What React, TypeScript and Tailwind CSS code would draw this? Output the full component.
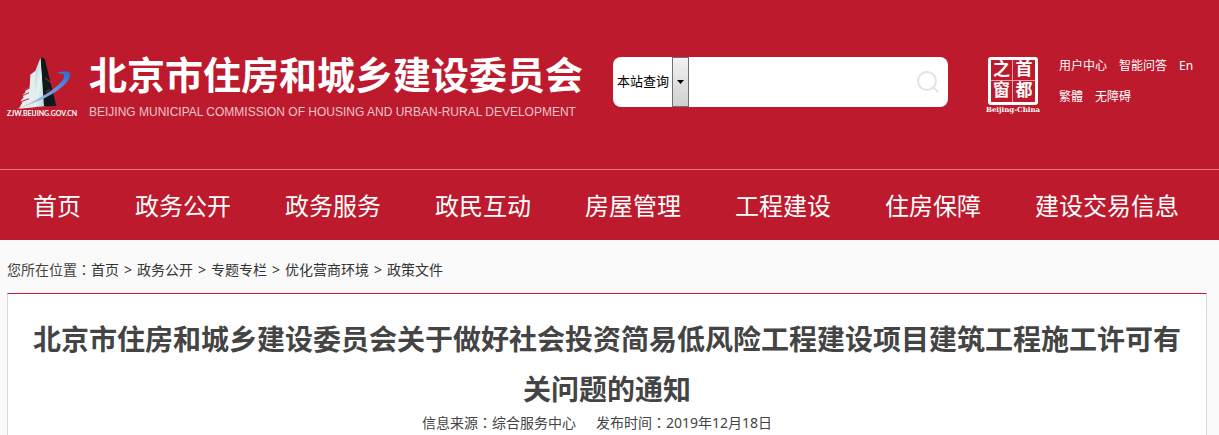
import { FormEvent, ReactNode, useState } from 'react'

const NAV = ['首页', '政务公开', '政务服务', '政民互动', '房屋管理', '工程建设', '住房保障', '建设交易信息']

const CRUMBS = ['首页', '政务公开', '专题专栏', '优化营商环境', '政策文件']

const TOOLS = [
  ['用户中心', '智能问答', 'En'],
  ['繁體', '无障碍'],
]

function Container({ children }: { children: ReactNode }) {
  return <div className="pl-[7px] pr-3">{children}</div>
}

// the TC face centres the full-width colon in its cell
function Colon() {
  return <span className="font-['Noto_Sans_CJK_TC',sans-serif]">：</span>
}

function Logo() {
  return (
    <a href="#" className="flex w-[70px] flex-col items-start text-white">
      <svg viewBox="20 34 192 162" className="h-[54px] w-16" aria-hidden="true">
        <defs>
          <linearGradient id="front" x1="0" y1="0" x2="1" y2="1">
            <stop offset="0" stopColor="#a9c8c8" />
            <stop offset="0.5" stopColor="#e4f4f3" />
            <stop offset="1" stopColor="#b4d2d2" />
          </linearGradient>
          <linearGradient id="swoosh" x1="0" y1="1" x2="1" y2="0">
            <stop offset="0" stopColor="#e8dff0" />
            <stop offset="0.5" stopColor="#7f9fe0" />
            <stop offset="1" stopColor="#1f6fd6" />
          </linearGradient>
        </defs>
        <path d="M90 90 108 76 104 188 56 192 62 180 66 174 60 170 70 158 66 152 76 142 74 136 88 128Z" fill="#e6eded" />
        <path d="M64 154 86 144M60 172 86 162M72 138 88 130" stroke="#bd1a2d" strokeWidth="3" />
        <path d="M121 38 106 76 102 187 133 185Z" fill="url(#front)" />
        <path d="M121 38 133 42 168 184 131 185Z" fill="#10191a" />
        <path d="M134 100 152 114M136 142 150 134" stroke="#a8323e" strokeWidth="3" />
        <path d="M166 86Q204 72 209 88C214 114 150 164 46 194C124 162 184 122 192 96Q194 84 166 86Z" fill="url(#swoosh)" />
      </svg>
      <span className="-mt-0.5 font-['Lato',sans-serif] text-[7px] leading-[10px] font-bold whitespace-nowrap">ZJW.BEIJING.GOV.CN</span>
    </a>
  )
}

function Seal() {
  return (
    <a href="#" className="flex w-14 flex-col items-center text-white">
      <span className="grid h-12 w-[50px] grid-cols-2 grid-rows-2 rounded-[3px] border-3 border-white text-center font-['Liberation_Serif','Noto_Sans_CJK_SC',serif] text-[17px] leading-5 font-bold">
        <span className="border-r border-b border-white/60">之</span>
        <span className="border-b border-white/60">首</span>
        <span className="border-r border-white/60">窗</span>
        <span>都</span>
      </span>
      <span className="font-['DejaVu_Serif',serif] text-[7px] leading-[10px] font-bold whitespace-nowrap">Beijing-China</span>
    </a>
  )
}

function Search() {
  const [query, setQuery] = useState('')
  const submit = (e: FormEvent) => e.preventDefault()

  return (
    <form onSubmit={submit} className="flex h-[50px] w-[335px] overflow-hidden rounded-lg bg-white text-black">
      <div className="grid w-[76px] shrink-0">
        <select aria-label="查询范围" className="col-start-1 row-start-1 appearance-none pl-1 text-[13px] outline-none">
          <option>本站查询</option>
          <option>全网查询</option>
        </select>
        <span className="pointer-events-none col-start-1 row-start-1 flex w-[17px] items-center justify-center justify-self-end border border-[#707070] bg-linear-to-b from-[#f2f2f2] to-[#cfcfcf]">
          <svg viewBox="0 0 7 4" className="h-1 w-[7px]" aria-hidden="true">
            <path d="M0 0H7L3.5 4Z" />
          </svg>
        </span>
      </div>
      <input
        type="text"
        aria-label="搜索"
        value={query}
        onChange={(e) => setQuery(e.target.value)}
        className="min-w-0 flex-1 px-2 text-sm outline-none"
      />
      <button type="submit" aria-label="查询" className="flex w-10 items-center justify-center">
        <svg viewBox="0 0 22 22" className="size-[22px]" fill="none" stroke="#e3e3e3" strokeWidth="2" aria-hidden="true">
          <circle cx="10" cy="10" r="9" />
          <path d="M16 16 21 21" />
        </svg>
      </button>
    </form>
  )
}

export default function App() {
  return (
    <div className="min-h-screen bg-[#fafafa] font-['Noto_Sans','Noto_Sans_CJK_SC',sans-serif] text-[#444]">
      <header className="bg-[#bd1a2d] text-white">
        <Container>
          <div className="flex h-[169px] items-start pt-14">
            <Logo />
            <div className="ml-3 shrink-0">
              <p className="text-[38px] leading-9 font-bold">北京市住房和城乡建设委员会</p>
              <p className="mt-3 font-['Liberation_Sans',sans-serif] text-xs leading-4 text-white/75">
                BEIJING MUNICIPAL COMMISSION OF HOUSING AND URBAN-RURAL DEVELOPMENT
              </p>
            </div>
            <div className="mt-px ml-[30px]">
              <Search />
            </div>
            <div className="mt-px ml-[37px]">
              <Seal />
            </div>
            <ul className="ml-[18px] text-xs leading-5">
              {TOOLS.map((row, i) => (
                <li key={i} className="mb-[11px] flex gap-3">
                  {row.map((name) => (
                    <a key={name} href="#">{name}</a>
                  ))}
                </li>
              ))}
            </ul>
          </div>
        </Container>
        <nav className="border-t border-[#da7a86]">
          <Container>
            <ul className="flex h-[70px] items-center gap-[54px] pt-0.5 pl-[26px] text-2xl">
              {NAV.map((name) => (
                <li key={name}>
                  <a href="#" className="whitespace-nowrap">{name}</a>
                </li>
              ))}
            </ul>
          </Container>
        </nav>
      </header>

      <Container>
        <div className="flex h-[53px] items-center pt-1.5 text-sm">
          <span>您所在位置<Colon /></span>
          {CRUMBS.map((name, i) => (
            <span key={name} className="text-[#333]">
              {i > 0 && <span className="mx-[5px]">&gt;</span>}
              <a href="#">{name}</a>
            </span>
          ))}
        </div>
        <main className="border border-t-[#bd1a2d] border-x-[#d9d9d9] border-b-0 bg-white px-5 pt-5 pb-1 text-center">
          <h1 className="text-[28px] leading-[50px] font-bold">
            北京市住房和城乡建设委员会关于做好社会投资简易低风险工程建设项目建筑工程施工许可有关问题的通知
          </h1>
          <p className="flex justify-center gap-5 pr-5 text-sm leading-4">
            <span>信息来源<Colon />综合服务中心</span>
            <span>发布时间<Colon />2019年12月18日</span>
          </p>
        </main>
      </Container>
    </div>
  )
}
